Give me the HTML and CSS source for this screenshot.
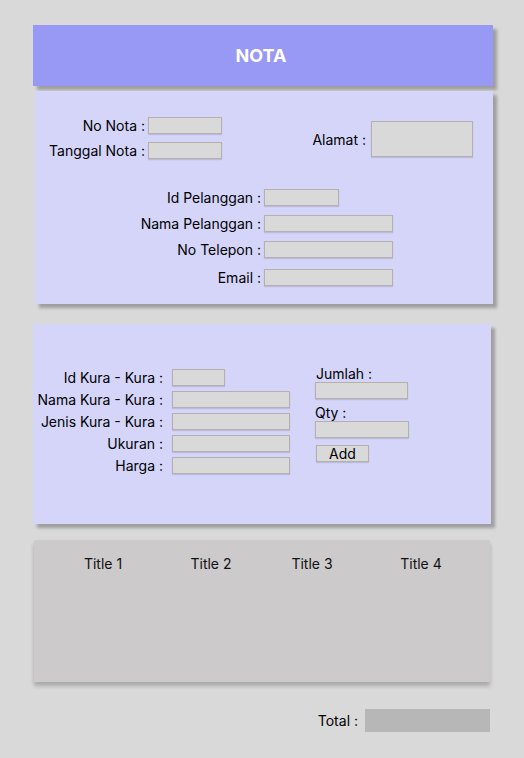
FILE: index.html
```html
<!DOCTYPE html>
<html lang="id">
<head>
<meta charset="utf-8">
<title>Nota</title>
<link rel="stylesheet" href="styles.css">
</head>
<body>
<div class="page">
  <header class="header">NOTA</header>

  <section class="card card-customer">
    <div class="top">
      <div class="form-grid form-grid-nota">
        <label class="lbl">No Nota :</label><span class="field w74"></span>
        <label class="lbl">Tanggal Nota :</label><span class="field w74"></span>
      </div>
      <div class="alamat">
        <label class="lbl">Alamat :</label><span class="field field-alamat"></span>
      </div>
    </div>
    <div class="form-grid form-grid-cust">
      <label class="lbl">Id Pelanggan :</label><span class="field w75"></span>
      <label class="lbl">Nama Pelanggan :</label><span class="field w129"></span>
      <label class="lbl">No Telepon :</label><span class="field w129"></span>
      <label class="lbl lbl-email">Email :</label><span class="field w129 field-email"></span>
    </div>
  </section>

  <section class="card card-item">
    <div class="form-grid form-grid-item">
      <label class="lbl">Id Kura - Kura :</label><span class="field w53"></span>
      <label class="lbl">Nama Kura - Kura :</label><span class="field w118"></span>
      <label class="lbl">Jenis Kura - Kura :</label><span class="field w118"></span>
      <label class="lbl">Ukuran :</label><span class="field w118"></span>
      <label class="lbl">Harga :</label><span class="field w118"></span>
    </div>
    <div class="side">
      <label class="side-lbl side-lbl-jumlah">Jumlah :</label>
      <span class="field w93"></span>
      <label class="side-lbl">Qty :</label>
      <span class="field w94"></span>
      <button class="btn">Add</button>
    </div>
  </section>

  <section class="card card-table">
    <div class="thead">
      <span>Title 1</span>
      <span>Title 2</span>
      <span>Title 3</span>
      <span>Title 4</span>
    </div>
  </section>

  <div class="total">
    <label class="lbl">Total :</label><span class="total-field"></span>
  </div>
</div>
</body>
</html>
```

FILE: styles.css
```css
* { box-sizing: border-box; }

html, body {
  margin: 0;
  padding: 0;
  background: #d9d9d9;
}

body {
  font-family: Inter, "Noto Sans", sans-serif;
  font-size: 14px;
  color: #000;
}

.page {
  width: 524px;
  padding-top: 25px;
}

.header {
  margin-left: 33px;
  width: 460px;
  height: 61px;
  padding-right: 4px;
  background: #9898f5;
  color: #fff;
  font-weight: 700;
  font-size: 18px;
  display: flex;
  align-items: center;
  justify-content: center;
  box-shadow: 4px 4px 3px rgba(0, 0, 0, 0.27);
}

.card {
  background: #d5d5fa;
  box-shadow: 4px 4px 3px rgba(0, 0, 0, 0.27);
}

.lbl {
  text-align: right;
  white-space: nowrap;
  line-height: 17px;
}

.field {
  display: block;
  height: 17px;
  background: #d9d9d9;
  border: 1px solid #b6afaf;
  box-shadow: 0 1px 1px rgba(0, 0, 0, 0.12);
}

.w53 { width: 53px; }
.w74 { width: 74px; }
.w75 { width: 75px; }
.w93 { width: 93px; }
.w94 { width: 94px; }
.w118 { width: 118px; }
.w129 { width: 129px; }

.form-grid {
  display: grid;
  align-items: center;
}

/* Customer card */
.card-customer {
  margin-top: 5px;
  margin-left: 35px;
  width: 458px;
  padding: 26px 20px 18px 0;
}

.top {
  display: flex;
  align-items: center;
  justify-content: space-between;
}

.form-grid-nota {
  grid-template-columns: 110px auto;
  column-gap: 3px;
  row-gap: 8px;
}

.alamat {
  display: flex;
  align-items: center;
  gap: 5px;
  margin-top: 2px;
}

.field-alamat {
  width: 102px;
  height: 36px;
}

.form-grid-cust {
  margin-top: 30px;
  grid-template-columns: 226px auto;
  column-gap: 3px;
  row-gap: 9px;
}

.lbl-email, .field-email { margin-top: 2px; }

/* Item card */
.card-item {
  margin-top: 20px;
  margin-left: 33px;
  width: 458px;
  height: 200px;
  padding-top: 41px;
  display: flex;
  align-items: flex-start;
}

.form-grid-item {
  margin-top: 4px;
  grid-template-columns: 130px auto;
  column-gap: 9px;
  row-gap: 5px;
}

.side {
  margin-left: 25px;
  display: flex;
  flex-direction: column;
  align-items: flex-start;
}

.side-lbl {
  line-height: 17px;
  margin-top: 5px;
}

.side-lbl-jumlah {
  margin-top: 0;
  margin-left: 1px;
}

.btn {
  margin-top: 7px;
  margin-left: 1px;
  width: 53px;
  height: 17px;
  padding: 0;
  font-family: Inter, "Noto Sans", sans-serif;
  font-size: 14px;
  line-height: 15px;
  color: #000;
  background: #d9d9d9;
  border: 1px solid #b6afaf;
  box-shadow: 0 1px 1px rgba(0, 0, 0, 0.12);
}

/* Table card */
.card-table {
  margin-top: 16px;
  margin-left: 34px;
  width: 456px;
  height: 142px;
  background: #cccaca;
  box-shadow: 0 4px 4px rgba(0, 0, 0, 0.22);
  padding-top: 15px;
}

.thead {
  display: grid;
  grid-template-columns: 138px 78px 124px 94px;
  line-height: 17px;
  text-align: center;
  color: #111;
}

/* Total */
.total {
  margin-top: 27px;
  width: 490px;
  display: flex;
  justify-content: flex-end;
  align-items: center;
  gap: 7px;
}

.total-field {
  display: block;
  width: 125px;
  height: 23px;
  background: #b7b7b7;
}
```
